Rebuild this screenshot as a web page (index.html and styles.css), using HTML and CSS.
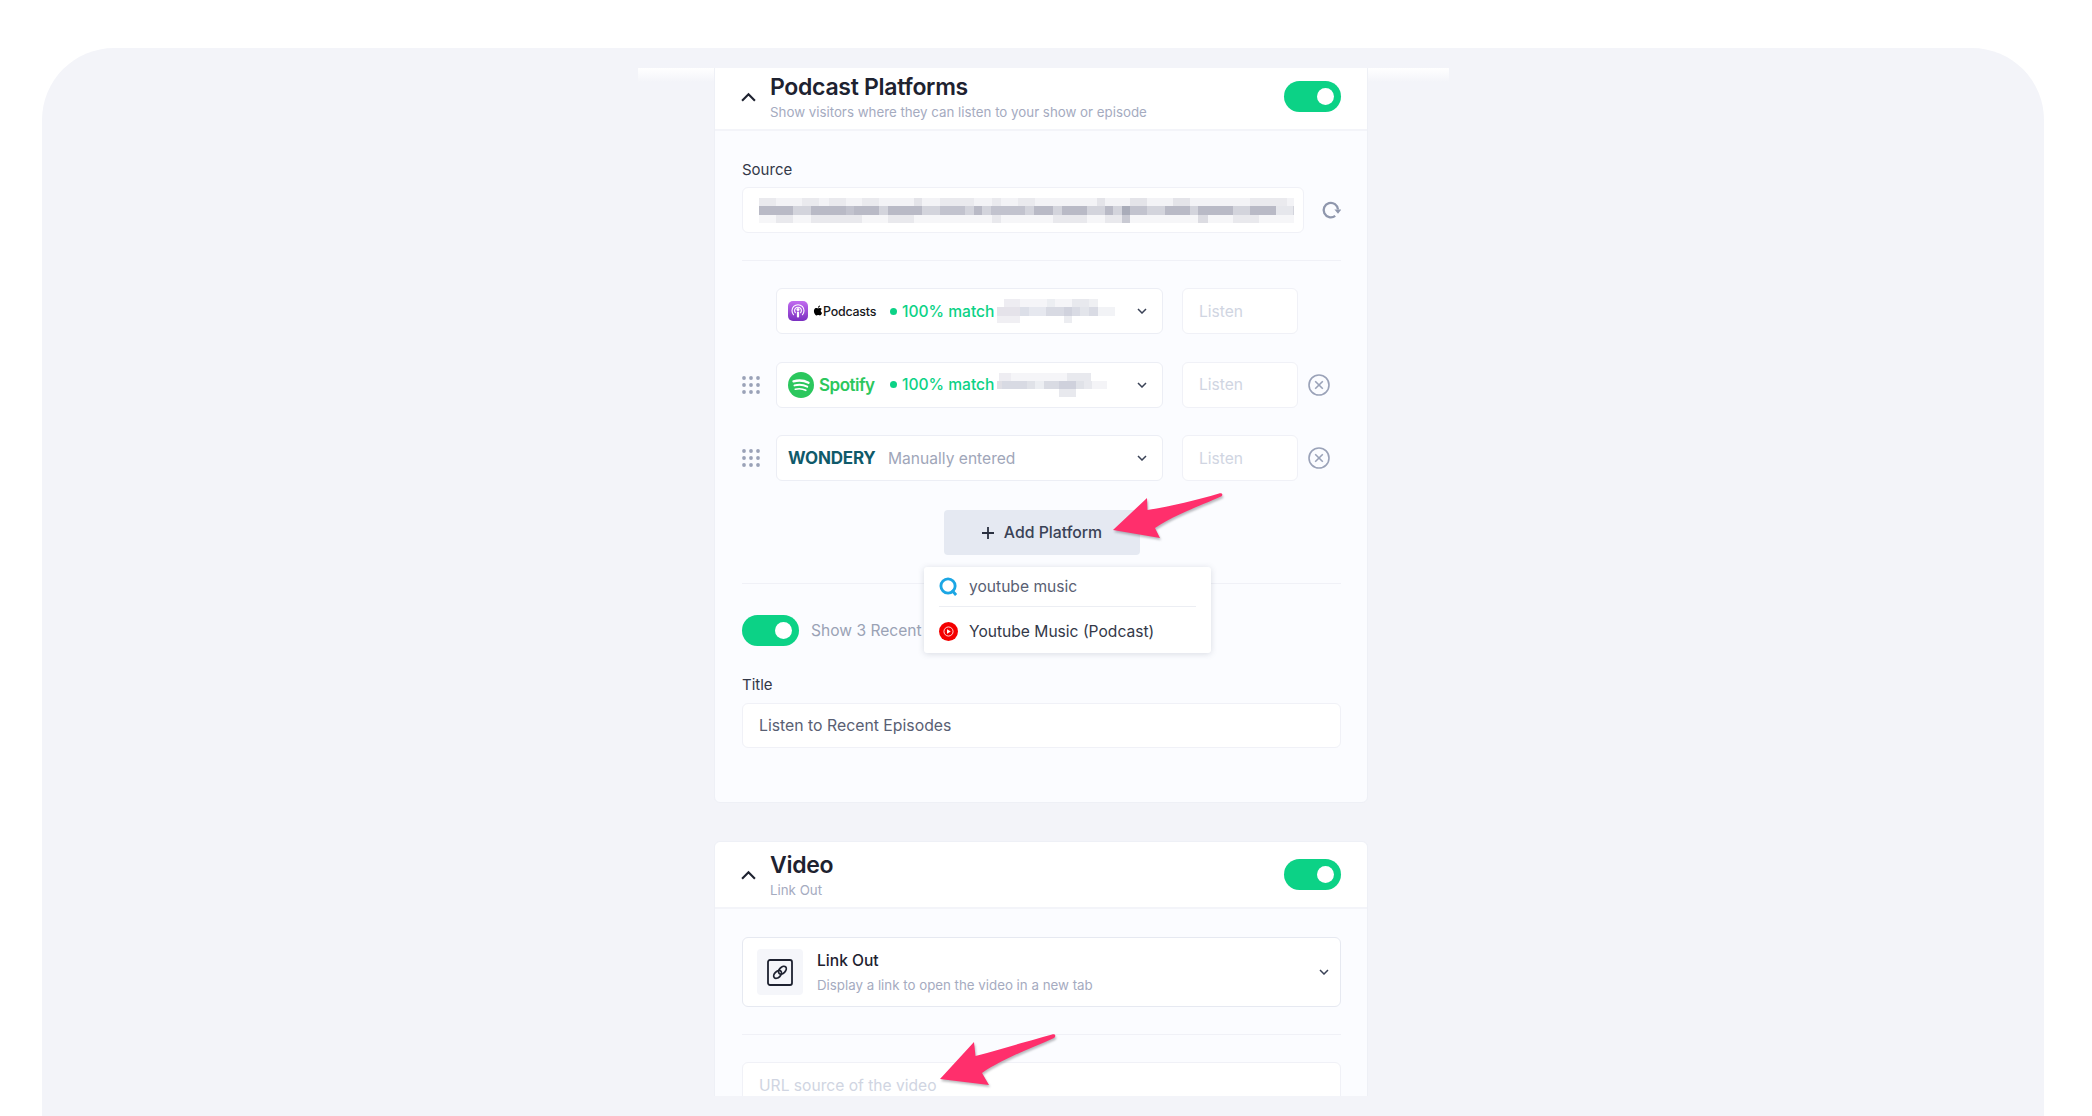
FILE: index.html
```html
<!DOCTYPE html>
<html lang="en">
<head>
    <meta charset="UTF-8">
    <title>Podcast Platforms</title>
    <link rel="stylesheet" href="styles.css">
</head>
<body>

<div class="stage">
    <div class="panel">

        <!-- Podcast Platforms card -->
        <section class="card card-first">
            <header class="card-header">
                <svg class="chevron-up" viewBox="0 0 14 9"><path d="M1 8l6-6 6 6"/></svg>
                <div class="card-heading">
                    <h2>Podcast Platforms</h2>
                    <p>Show visitors where they can listen to your show or episode</p>
                </div>
                <div class="toggle"><span class="knob"></span></div>
            </header>

            <div class="card-body">
                <div class="label">Source</div>
                <div class="source-row">
                    <div class="input source-input">
                        <svg class="mosaic" viewBox="0 0 535 25" width="535" height="25">
                            <path fill="#f3f3f6" d="M0 0h535v8H0z"/>
                            <path fill="#f6f6f8" d="M0 17h535v8H0z"/>
                            <path fill="#eaeaee" d="M0 0h17v8H0zM43 0h17v8H43zM70 0h17v8H70zM103 0h17v8h-17zM181 0h34v8h-34zM233 0h9v8h-9zM259 0h17v8h-17zM491 0h37v8h-37z"/>
                            <path fill="#e4e4e9" d="M155 0h8v8h-8zM338 0h8v8h-8zM371 0h17v8h-17zM414 0h17v8h-17z"/>
                            <path fill="#e9e9ed" d="M17 17h17v8H17zM52 17h51v8H52zM129 17h26v8h-26zM233 17h9v8h-9zM294 17h34v8h-34zM346 17h17v8h-17zM474 17h26v8h-26z"/>
                            <path fill="#c9cad3" d="M363 17h8v8h-8z"/>
                            <path fill="#dcdce2" d="M439 17h10v8h-10z"/>
                            <path fill="#d3d4dc" d="M0 8h535v9H0z"/>
                            <path fill="#b9bac6" d="M0 8h34v9H0zM52 8h35v9H52zM95 8h25v9H95zM129 8h34v9h-34zM215 8h8v9h-8zM275 8h19v9h-19zM303 8h25v9h-25zM346 8h8v9h-8zM406 8h25v9h-25zM439 8h35v9h-35zM491 8h26v9h-26z"/>
                            <path fill="#c2c3ce" d="M87 8h8v9h-8zM181 8h25v9h-25zM232 8h34v9h-34zM371 8h17v9h-17z"/>
                            <path fill="#a9acb9" d="M363 8h8v9h-8z"/>
                            <path fill="#e6e7ec" d="M517 8h17v9h-17z"/>
                        </svg>
                    </div>
                    <svg class="refresh-icon" viewBox="0 0 20 20"><path d="M14.2 15.8A7.2 7.2 0 1 1 17 9.5"/><path class="refresh-head" d="M13.4 9.4h7L17 13.8z"/></svg>
                </div>

                <hr class="divider">

                <!-- Platform rows -->
                <div class="platform-row">
                    <div class="select select-offset">
                        <div class="logo">
                            <svg class="logo-podcasts" viewBox="0 0 20 20">
                                <defs>
                                    <linearGradient id="podcast-bg" x1="0" y1="0" x2="0" y2="1">
                                        <stop offset="0" stop-color="#c26cf0"/>
                                        <stop offset="1" stop-color="#7a2fc0"/>
                                    </linearGradient>
                                </defs>
                                <rect width="20" height="20" rx="5" fill="url(#podcast-bg)"/>
                                <path d="M5.8 14a6 6 0 1 1 8.4 0M7.6 12a3.4 3.4 0 1 1 4.8 0" fill="none" stroke="#fff" stroke-width="1.1"/>
                                <circle cx="10" cy="8.6" r="1.5" fill="#fff"/>
                                <rect x="8.9" y="10.6" width="2.2" height="6" rx="1" fill="#fff"/>
                            </svg>
                            <svg class="logo-apple" viewBox="0 0 24 24"><path d="M12.152 6.896c-.948 0-2.415-1.078-3.96-1.04-2.04.027-3.91 1.183-4.961 3.014-2.117 3.675-.546 9.103 1.519 12.09 1.013 1.454 2.208 3.09 3.792 3.039 1.52-.065 2.09-.987 3.935-.987 1.831 0 2.35.987 3.96.948 1.637-.026 2.676-1.48 3.676-2.948 1.156-1.688 1.636-3.325 1.662-3.415-.039-.013-3.182-1.221-3.22-4.857-.026-3.04 2.48-4.494 2.597-4.559-1.429-2.09-3.623-2.324-4.39-2.376-2-.156-3.675 1.09-4.61 1.09zM15.53 3.83c.843-1.012 1.4-2.427 1.245-3.83-1.207.052-2.662.805-3.532 1.818-.78.896-1.454 2.338-1.273 3.714 1.338.104 2.715-.688 3.559-1.701"/></svg>
                            <span class="logo-podcasts-text">Podcasts</span>
                        </div>
                        <span class="match-dot"></span>
                        <span class="match-text">100% match</span>
                        <svg class="mosaic-small" viewBox="0 0 118 24" width="118" height="24">
                            <path fill="#f0eff3" d="M0 8h23v17H0z"/>
                            <path fill="#eeedf2" d="M7 0h16v8H7z"/>
                            <path fill="#f5f5f8" d="M23 0h27v8H23zM58 0h17v8H58z"/>
                            <path fill="#eceef2" d="M50 0h8v8h-8z"/>
                            <path fill="#e8e9ee" d="M75 0h17v8H75z"/>
                            <path fill="#eff0f3" d="M92 0h9v8h-9z"/>
                            <path fill="#e5e3ea" d="M0 8h23v9H0z"/>
                            <path fill="#dcdfe8" d="M23 8h9v9h-9z"/>
                            <path fill="#e6e8ef" d="M32 8h8v9h-8zM40 8h9v9h-9z"/>
                            <path fill="#d8dae3" d="M49 8h18v9H49z"/>
                            <path fill="#d0d2dd" d="M67 8h8v9h-8z"/>
                            <path fill="#d9dbe4" d="M75 8h8v9h-8zM92 8h9v9h-9z"/>
                            <path fill="#e3e5eb" d="M83 8h9v9h-9z"/>
                            <path fill="#f2f3f6" d="M101 8h17v9h-17z"/>
                            <path fill="#ecedf1" d="M67 17h8v7h-8z"/>
                        </svg>
                        <svg class="chevron-down" viewBox="0 0 10 6"><path d="M1 1l4 4 4-4"/></svg>
                    </div>
                    <div class="input listen">Listen</div>
                </div>

                <div class="platform-row">
                    <svg class="grip" viewBox="0 0 18 18"><g><circle cx="2" cy="2" r="1.9"/><circle cx="9" cy="2" r="1.9"/><circle cx="16" cy="2" r="1.9"/><circle cx="2" cy="9" r="1.9"/><circle cx="9" cy="9" r="1.9"/><circle cx="16" cy="9" r="1.9"/><circle cx="2" cy="16" r="1.9"/><circle cx="9" cy="16" r="1.9"/><circle cx="16" cy="16" r="1.9"/></g></svg>
                    <div class="select">
                        <div class="logo">
                            <svg class="logo-spotify" viewBox="0 0 26 26">
                                <circle cx="13" cy="13" r="13" fill="#2bc75d"/>
                                <path d="M5.5 9.3c5-1.4 10.5-1 15 1.4" fill="none" stroke="#fff" stroke-width="2.4" stroke-linecap="round"/>
                                <path d="M6.5 13.4c4.4-1.1 9-.7 12.7 1.3" fill="none" stroke="#fff" stroke-width="2" stroke-linecap="round"/>
                                <path d="M7.3 17.2c3.7-.9 7.4-.5 10.5 1.1" fill="none" stroke="#fff" stroke-width="1.6" stroke-linecap="round"/>
                            </svg>
                            <span class="logo-spotify-text">Spotify</span>
                        </div>
                        <span class="match-dot"></span>
                        <span class="match-text">100% match</span>
                        <svg class="mosaic-small" viewBox="0 0 118 24" width="118" height="24">
                            <path fill="#e0dfe5" d="M0 8h5v8H0z"/>
                            <path fill="#eeedf2" d="M2 0h12v8H2z"/>
                            <path fill="#f5f5f8" d="M14 0h56v8H14z"/>
                            <path fill="#e8e9ee" d="M70 0h24v8H70z"/>
                            <path fill="#d8dae3" d="M5 8h25v8H5z"/>
                            <path fill="#e0e2e8" d="M30 8h8v8h-8zM79 8h8v8h-8z"/>
                            <path fill="#eceef2" d="M38 8h9v8h-9z"/>
                            <path fill="#d9dbe3" d="M47 8h15v8H47z"/>
                            <path fill="#cfd1dc" d="M62 8h17v8H62z"/>
                            <path fill="#e8e9ee" d="M87 8h8v8h-8zM62 16h17v8H62z"/>
                            <path fill="#f4f4f7" d="M95 8h15v8H95z"/>
                        </svg>
                        <svg class="chevron-down" viewBox="0 0 10 6"><path d="M1 1l4 4 4-4"/></svg>
                    </div>
                    <div class="input listen">Listen</div>
                    <svg class="remove-icon" viewBox="0 0 22 22"><circle cx="11" cy="11" r="10"/><path d="M7.2 7.2l7.6 7.6M14.8 7.2l-7.6 7.6"/></svg>
                </div>

                <div class="platform-row">
                    <svg class="grip" viewBox="0 0 18 18"><g><circle cx="2" cy="2" r="1.9"/><circle cx="9" cy="2" r="1.9"/><circle cx="16" cy="2" r="1.9"/><circle cx="2" cy="9" r="1.9"/><circle cx="9" cy="9" r="1.9"/><circle cx="16" cy="9" r="1.9"/><circle cx="2" cy="16" r="1.9"/><circle cx="9" cy="16" r="1.9"/><circle cx="16" cy="16" r="1.9"/></g></svg>
                    <div class="select">
                        <div class="logo"><span class="logo-wondery-text">WONDERY</span></div>
                        <span class="manual-text">Manually entered</span>
                        <svg class="chevron-down" viewBox="0 0 10 6"><path d="M1 1l4 4 4-4"/></svg>
                    </div>
                    <div class="input listen">Listen</div>
                    <svg class="remove-icon" viewBox="0 0 22 22"><circle cx="11" cy="11" r="10"/><path d="M7.2 7.2l7.6 7.6M14.8 7.2l-7.6 7.6"/></svg>
                </div>

                <div class="add-row">
                    <button class="add-button"><svg class="plus-icon" viewBox="0 0 14 14"><path d="M7 1v12M1 7h12"/></svg>Add Platform</button>
                </div>

                <hr class="divider divider-add">

                <div class="recent-row">
                    <div class="toggle"><span class="knob"></span></div>
                    <span class="recent-text">Show 3 Recent</span>
                </div>

                <div class="label label-title">Title</div>
                <div class="input title-input">Listen to Recent Episodes</div>

                <!-- Platform search dropdown -->
                <div class="search-popup">
                    <div class="search-line">
                        <svg class="search-icon" viewBox="0 0 20 20"><circle cx="9.5" cy="9.5" r="7.5"/><path d="M13.5 14l4.5 5"/></svg>
                        <span>youtube music</span>
                    </div>
                    <div class="search-result">
                        <svg class="youtube-icon" viewBox="0 0 20 20">
                            <circle cx="10" cy="10" r="10" fill="#f40000"/>
                            <circle cx="10" cy="10" r="4.8" fill="none" stroke="#fff" stroke-width="0.9"/>
                            <path d="M8.4 7.6l4 2.4-4 2.4z" fill="#fff"/>
                        </svg>
                        <span>Youtube Music (Podcast)</span>
                    </div>
                </div>
            </div>
        </section>

        <!-- Video card -->
        <section class="card card-video">
            <header class="card-header">
                <svg class="chevron-up" viewBox="0 0 14 9"><path d="M1 8l6-6 6 6"/></svg>
                <div class="card-heading">
                    <h2>Video</h2>
                    <p>Link Out</p>
                </div>
                <div class="toggle"><span class="knob"></span></div>
            </header>

            <div class="card-body">
                <div class="video-select">
                    <div class="video-icon-box">
                        <svg class="link-icon" viewBox="0 0 26 27">
                            <rect x="1" y="1" width="24" height="25" rx="2"/>
                            <ellipse cx="10.6" cy="15.4" rx="3" ry="4.6" transform="rotate(45 10.6 15.4)"/>
                            <ellipse cx="15.4" cy="11.2" rx="3" ry="4.6" transform="rotate(45 15.4 11.2)"/>
                        </svg>
                    </div>
                    <div class="video-select-text">
                        <strong>Link Out</strong>
                        <span>Display a link to open the video in a new tab</span>
                    </div>
                    <svg class="chevron-down" viewBox="0 0 10 6"><path d="M1 1l4 4 4-4"/></svg>
                </div>

                <hr class="divider">

                <div class="input url-input">URL source of the video</div>
            </div>
        </section>
    </div>

    <!-- Annotation arrows -->
    <svg class="arrow arrow-add" viewBox="0 0 120 60"><path d="M1 38L35 6 35.5 18C60 14 85 8 107 1.5 111 .5 111 3.500 109 4.500 90 13 60 24 43 36L48 46Z"/></svg>
    <svg class="arrow arrow-url" viewBox="0 0 124 62"><path d="M2 46L36 9 37.500 23C64 16 90 8 114 1.500 118 .5 118 3.500 116 5 94 15 64 26 44 40L51 52Z"/></svg>
</div>

</body>
</html>
```

FILE: styles.css
```css
* {
    box-sizing: border-box;
}

body {
    margin: 0;
    padding: 48px 48px 0 42px;
    height: 1116px;
    overflow: hidden;
    background-color: #fff;
    font-family: 'Inter', 'Liberation Sans', sans-serif;
    font-size: 15.6px;
    color: #333848;
}

.stage {
    position: relative;
    height: 1068px;
    padding: 20px 595px 0 596px;
    background-color: #f3f4f9;
    border-radius: 72px 72px 0 0;
}

.panel {
    position: relative;
    height: 1028px;
    padding-left: 76px;
    overflow: hidden;
}

/* Soft edge where the scroll area starts */
.panel::before {
    content: "";
    position: absolute;
    top: 0;
    left: 0;
    right: 0;
    height: 14px;
    background: linear-gradient(#fff, #f3f4f9);
}

.card {
    position: relative;
    width: 654px;
    background-color: #fbfcff;
    border: 1px solid #eef0f6;
    border-radius: 6px;
}

.card-first {
    margin-top: -5px;
    height: 740px;
}

.card-video {
    margin-top: 38px;
}

.card-first .card-body {
    padding-top: 29px;
}

.card-header {
    display: flex;
    align-items: center;
    height: 67px;
    padding: 0 26px 0 27px;
    background-color: #fff;
    border-bottom: 2px solid #f3f4f9;
    border-radius: 6px 6px 0 0;
}

.chevron-up {
    width: 15px;
    height: 10px;
    margin-right: 14px;
    margin-left: -1px;
    fill: none;
    stroke: #1e2230;
    stroke-width: 2;
}

.card-heading {
    flex: 1;
}

.card-heading h2 {
    margin: 0;
    font-size: 23px;
    font-weight: 600;
    line-height: 28px;
    letter-spacing: -0.3px;
    color: #1e2230;
}

.card-heading p {
    margin: 2px 0 0;
    font-size: 13.3px;
    line-height: 18px;
    color: #a5abbf;
}

.toggle {
    display: flex;
    align-items: center;
    justify-content: flex-end;
    flex-shrink: 0;
    width: 57px;
    height: 31px;
    padding-right: 7px;
    background-color: #0cd286;
    border-radius: 16px;
}

.knob {
    width: 17px;
    height: 17px;
    background-color: #fff;
    border-radius: 50%;
}

.card-body {
    position: relative;
    padding: 28px 26px 0 27px;
}

.label {
    font-size: 15px;
    line-height: 20px;
    color: #333848;
    margin-bottom: 7px;
}

.label-title {
    margin-top: 29px;
    margin-bottom: 8px;
}

.input {
    display: flex;
    align-items: center;
    height: 46px;
    padding: 0 16px;
    background-color: #fff;
    border: 1px solid #f0f1f7;
    border-radius: 6px;
}

.source-row {
    display: flex;
    align-items: center;
}

.source-input {
    width: 562px;
    overflow: hidden;
}

.mosaic {
    flex-shrink: 0;
}

.refresh-icon {
    width: 20px;
    height: 20px;
    margin-left: 17px;
    fill: none;
    stroke: #8f97ad;
    stroke-width: 2.3;
}

.refresh-head {
    fill: #8f97ad;
    stroke: none;
}

.divider {
    height: 1px;
    margin: 27px 0;
    border: 0;
    background-color: #f0f1f7;
}

.platform-row {
    display: flex;
    align-items: center;
    margin-bottom: 27.5px;
}

.grip {
    width: 18px;
    height: 18px;
    margin-right: 16px;
    fill: #9aa2b8;
}

.select {
    display: flex;
    align-items: center;
    width: 387px;
    height: 46px;
    padding: 0 15px 0 11px;
    background-color: #fff;
    border: 1px solid #eceef5;
    border-radius: 6px;
}

.select-offset {
    margin-left: 34px;
}

.logo {
    display: flex;
    align-items: center;
    flex-shrink: 0;
    width: 100px;
}

.logo-podcasts {
    width: 20px;
    height: 20px;
    margin-right: 5px;
}

.logo-apple {
    width: 10px;
    height: 11px;
    margin-top: -2px;
    fill: #000;
}

.logo-podcasts-text {
    font-size: 12.4px;
    font-weight: 500;
    letter-spacing: -0.2px;
    color: #17181c;
}

.logo-spotify {
    width: 26px;
    height: 26px;
    margin-right: 5px;
}

.logo-spotify-text {
    font-size: 17px;
    font-weight: 600;
    letter-spacing: -0.5px;
    color: #2bc75d;
}

.logo-wondery-text {
    font-size: 17px;
    font-weight: 700;
    letter-spacing: -0.2px;
    color: #0f5a6a;
}

.match-dot {
    flex-shrink: 0;
    width: 7px;
    height: 7px;
    margin: 0 5px 0 2px;
    background-color: #0cd286;
    border-radius: 50%;
}

.match-text {
    font-weight: 500;
    white-space: nowrap;
    color: #0cd286;
}

.mosaic-small {
    flex-shrink: 0;
    margin-left: 2px;
}

.manual-text {
    color: #a0a6b9;
}

.chevron-down {
    flex-shrink: 0;
    width: 10px;
    height: 6px;
    margin-left: auto;
    fill: none;
    stroke: #3a4256;
    stroke-width: 1.5;
}

.listen {
    width: 116px;
    margin-left: 19px;
    color: #d0d5e2;
}

.remove-icon {
    width: 22px;
    height: 22px;
    margin-left: 10px;
    fill: none;
    stroke: #9aa2b8;
    stroke-width: 1.6;
}

.add-row {
    display: flex;
    justify-content: center;
    margin-top: 29px;
}

.add-button {
    display: flex;
    align-items: center;
    justify-content: center;
    width: 196px;
    height: 45px;
    background-color: #e5e9f2;
    border: none;
    border-radius: 4px;
    font-family: inherit;
    font-size: 15.8px;
    font-weight: 500;
    color: #3a4256;
}

.plus-icon {
    width: 14px;
    height: 14px;
    margin-right: 9px;
    fill: none;
    stroke: #2a3040;
    stroke-width: 1.8;
}

.divider-add {
    margin: 28px 0 31px;
}

.recent-row {
    display: flex;
    align-items: center;
}

.recent-text {
    margin-left: 12px;
    color: #9aa2b5;
}

.title-input {
    height: 45px;
    font-size: 15.8px;
    color: #596073;
}

.search-popup {
    position: absolute;
    top: 436px;
    left: 209px;
    width: 287px;
    height: 86px;
    padding: 0 15px;
    background-color: #fff;
    border-radius: 3px;
    box-shadow: 0 1px 6px rgba(60, 70, 100, 0.18);
}

.search-line,
.search-result {
    display: flex;
    align-items: center;
}

.search-line {
    height: 40px;
    border-bottom: 1px solid #eceef3;
    color: #596073;
}

.search-result {
    height: 46px;
    padding-top: 2px;
    color: #333848;
}

.search-line span,
.search-result span {
    margin-left: 11px;
}

.search-icon {
    width: 19px;
    height: 19px;
    fill: none;
    stroke: #1ba6e4;
    stroke-width: 3;
}

.youtube-icon {
    width: 19px;
    height: 19px;
}

.video-select {
    display: flex;
    align-items: center;
    height: 70px;
    padding: 0 11px 0 14px;
    background-color: #fff;
    border: 1px solid #e6e9f1;
    border-radius: 6px;
}

.video-icon-box {
    display: flex;
    align-items: center;
    justify-content: center;
    width: 46px;
    height: 46px;
    background-color: #f5f6fa;
    border-radius: 4px;
}

.link-icon {
    width: 26px;
    height: 27px;
    fill: none;
    stroke: #1e2230;
    stroke-width: 1.8;
}

.video-select-text {
    display: flex;
    flex-direction: column;
    margin-left: 14px;
}

.video-select-text strong {
    font-weight: 500;
    line-height: 20px;
    color: #1e2230;
}

.video-select-text span {
    margin-top: 5px;
    font-size: 13.3px;
    line-height: 18px;
    color: #a5abbf;
}

.url-input {
    color: #d0d5e2;
    align-items: flex-start;
    padding-top: 13px;
}

/* Pink callout arrows drawn on top of the form */
.arrow {
    position: absolute;
    fill: #ff2f6c;
    filter: drop-shadow(1px 2px 1px rgba(60, 60, 70, 0.35));
}

.arrow-add {
    top: 444px;
    left: 1070px;
    width: 120px;
    height: 60px;
}

.arrow-url {
    top: 985px;
    left: 896px;
    width: 124px;
    height: 62px;
}
```
